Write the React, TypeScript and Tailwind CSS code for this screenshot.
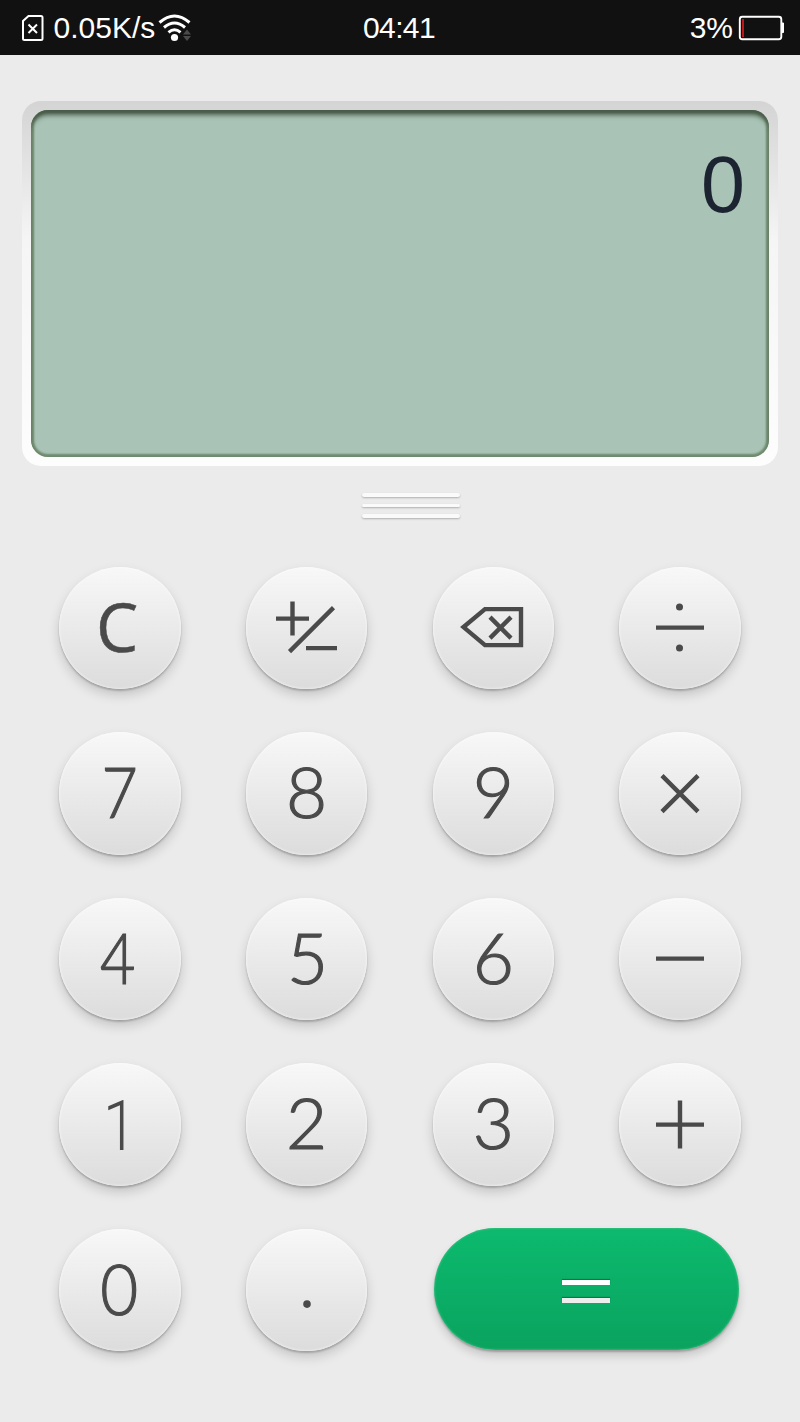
import type { ReactNode } from "react"
import clsx from "clsx"

interface KeyProps {
    label: string;
    children: ReactNode;
}

const Key = ({ label, children }: KeyProps) => {
    return (
        <button
            aria-label={label}
            className="flex h-[122.5px] w-[121.5px] items-center justify-center rounded-full bg-linear-to-b from-[#f8f8f8] to-[#dcdcdc] text-[#4a4a4a] shadow-[inset_0_0_2px_1px_rgba(255,255,255,0.4),0_2px_2px_rgba(0,0,0,0.2),0_6px_12px_rgba(0,0,0,0.17)]"
        >
            {children}
        </button>
    )
}

interface DigitProps {
    value: string;
    className?: string;
}

const Digit = ({ value, className }: DigitProps) => {
    return (
        <Key label={value}>
            <span className={clsx("text-[71px] leading-none font-light", className ?? "pb-[5px] font-['Lato',sans-serif] [-webkit-text-stroke:1.2px_#4a4a4a]")}>
                {value}
            </span>
        </Key>
    )
}

interface SymbolKeyProps {
    label: string;
    children: ReactNode;
}

const SymbolKey = ({ label, children }: SymbolKeyProps) => {
    return (
        <Key label={label}>
            <svg viewBox="0 -0.6 121 123" className="h-[123px] w-[121px] shrink-0" fill="none" stroke="currentColor" strokeWidth="4.4">
                {children}
            </svg>
        </Key>
    )
}

const StatusBar = () => {
    return (
        <header className="flex h-[55px] items-center bg-[#111111] font-['Liberation_Sans',sans-serif] text-[30px] leading-none text-white">
            <div className="flex flex-1 items-center pl-[21px]">
                <svg viewBox="0 0 23 28" className="h-7 w-[23px]" fill="none" stroke="white" strokeWidth="2">
                    <path d="M7.5 2H20a1.5 1.5 0 0 1 1.5 1.5v21A1.5 1.5 0 0 1 20 26H3.5A1.5 1.5 0 0 1 2 24.5V7Z" />
                    <path d="m7.5 10.5 8.5 8.5M16 10.5l-8.5 8.5" />
                </svg>
                <span className="ml-[9.5px]">0.05K/s</span>
                <svg viewBox="0 0 34 28" className="ml-[3px] h-7 w-[34px]" fill="none" stroke="white" strokeWidth="3">
                    <path d="M1.5 8.5Q16.5-4.5 31.5 8.5" />
                    <path d="M6 13.5q10.5-9 21 0" />
                    <path d="M10.5 18.3q6-5 12 0" />
                    <circle cx="16.5" cy="23.5" r="3.6" fill="white" stroke="none" />
                    <path d="m25 20.5 4-5 4 5ZM25 22l4 5 4-5Z" fill="#4a4a4a" stroke="none" />
                </svg>
            </div>
            <span className="-translate-x-1 tracking-[-0.6px]">04:41</span>
            <div className="flex flex-1 items-center justify-end pr-[15px]">
                <span>3%</span>
                <svg viewBox="0 0 47 26" className="ml-[5px] h-[26px] w-[47px]">
                    <rect x="1.8" y="1.8" width="41.5" height="22.5" rx="2.5" fill="none" stroke="white" strokeWidth="1.9" />
                    <path d="M44 8h1.5v9.5H44" fill="white" stroke="white" />
                    <rect x="4" y="4" width="2" height="18" fill="#c01818" />
                </svg>
            </div>
        </header>
    )
}

const Display = ({ value }: { value: string }) => {
    return (
        <div className="mx-[22px] mt-[46px] h-[365px] rounded-[19px] bg-linear-to-b from-[#d4d4d4] via-[#f5f5f5] via-38% to-[#fdfdfd] p-[9px]">
            <div className="flex h-full justify-end rounded-[17px] bg-[#a9c3b6] pt-[30px] pr-[24px] shadow-[inset_0_7px_5px_-2px_#485a49,inset_0_0_2px_3px_#6f8a6e]">
                <span className="font-['Liberation_Sans',sans-serif] text-[79px] leading-[90px] text-[#1c2331]">{value}</span>
            </div>
        </div>
    )
}

const Handle = () => {
    return (
        <div className="mx-auto mt-[27px] flex w-[98px] translate-x-[11px] flex-col gap-[7px]">
            {[0, 1, 2].map((i) => (
                <div key={i} className="h-[3.7px] rounded-full bg-[#fafafa] shadow-[0_1px_2px_rgba(0,0,0,0.25)]" />
            ))}
        </div>
    )
}

const App = () => {
    return (
        <main className="h-[1422px] w-[800px] overflow-hidden bg-[#ebebeb]">
            <StatusBar />
            <Display value="0" />
            <Handle />

            <div className="mx-auto mt-[48.5px] grid w-[746.67px] auto-rows-[165.5px] grid-cols-4 justify-items-center">
                <Key label="clear">
                    <span className="-translate-x-[3px] pb-[3px] font-['Open_Sans',sans-serif] text-[67px] leading-none [-webkit-text-stroke:0.5px_#4a4a4a]">C</span>
                </Key>
                <SymbolKey label="plus minus">
                    <path d="M30 52h33M46.5 35v34M43.5 85 87.5 41M60 81.5h31" />
                </SymbolKey>
                <SymbolKey label="backspace">
                    <path d="M88 42.5v36H52L30.5 60.5 52 42.5Z" />
                    <path d="m57 50.5 21 21M78 50.5l-21 21" />
                </SymbolKey>
                <SymbolKey label="divide">
                    <path d="M37 61h48" />
                    <circle cx="60.5" cy="40.5" r="3.5" fill="currentColor" stroke="none" />
                    <circle cx="60.5" cy="81.5" r="3.5" fill="currentColor" stroke="none" />
                </SymbolKey>

                <Digit value="7" className="scale-x-88 pb-[5px] font-['Lato',sans-serif] [-webkit-text-stroke:1.2px_#4a4a4a]" />
                <Digit value="8" />
                <Digit value="9" />
                <SymbolKey label="multiply">
                    <path d="m43 43 36 36M79 43 43 79" />
                </SymbolKey>

                <Digit value="4" className="-translate-x-[2px] scale-x-86 pb-[5px] font-['Lato',sans-serif] [-webkit-text-stroke:1.2px_#4a4a4a]" />
                <Digit value="5" className="translate-x-px pb-[5px] font-['Lato',sans-serif] [-webkit-text-stroke:1.2px_#4a4a4a]" />
                <Digit value="6" />
                <SymbolKey label="minus">
                    <path d="M37 61h48" />
                </SymbolKey>

                <Digit value="1" className="scale-x-85 pt-0.5 font-['Roboto',sans-serif]" />
                <Digit value="2" />
                <Digit value="3" />
                <SymbolKey label="plus">
                    <path d="M37 61h48M61 37v48" />
                </SymbolKey>

                <Digit value="0" className="-translate-x-[0.5px] scale-x-92 pb-1 font-['Lato',sans-serif] [-webkit-text-stroke:1.2px_#4a4a4a]" />
                <SymbolKey label="decimal point">
                    <circle cx="61" cy="75.5" r="3.8" fill="currentColor" stroke="none" />
                </SymbolKey>
                <button
                    aria-label="equals"
                    className="col-span-2 -mt-px mr-px flex h-[122px] w-[305px] flex-col items-center justify-center gap-[13px] rounded-full bg-linear-to-b from-[#0cba6e] to-[#0aa35f] pt-1.5 shadow-[inset_0_0_2px_1px_rgba(80,200,140,0.5),0_2px_2px_rgba(0,0,0,0.22),0_6px_10px_rgba(0,0,0,0.16)]"
                >
                    <span className="h-[5px] w-12 bg-white shadow-[0_-1px_1px_rgba(0,0,0,0.3)]" />
                    <span className="h-[5px] w-12 bg-[#eeeeee] shadow-[0_-1px_1px_rgba(0,0,0,0.3)]" />
                </button>
            </div>
        </main>
    )
}

export default App
